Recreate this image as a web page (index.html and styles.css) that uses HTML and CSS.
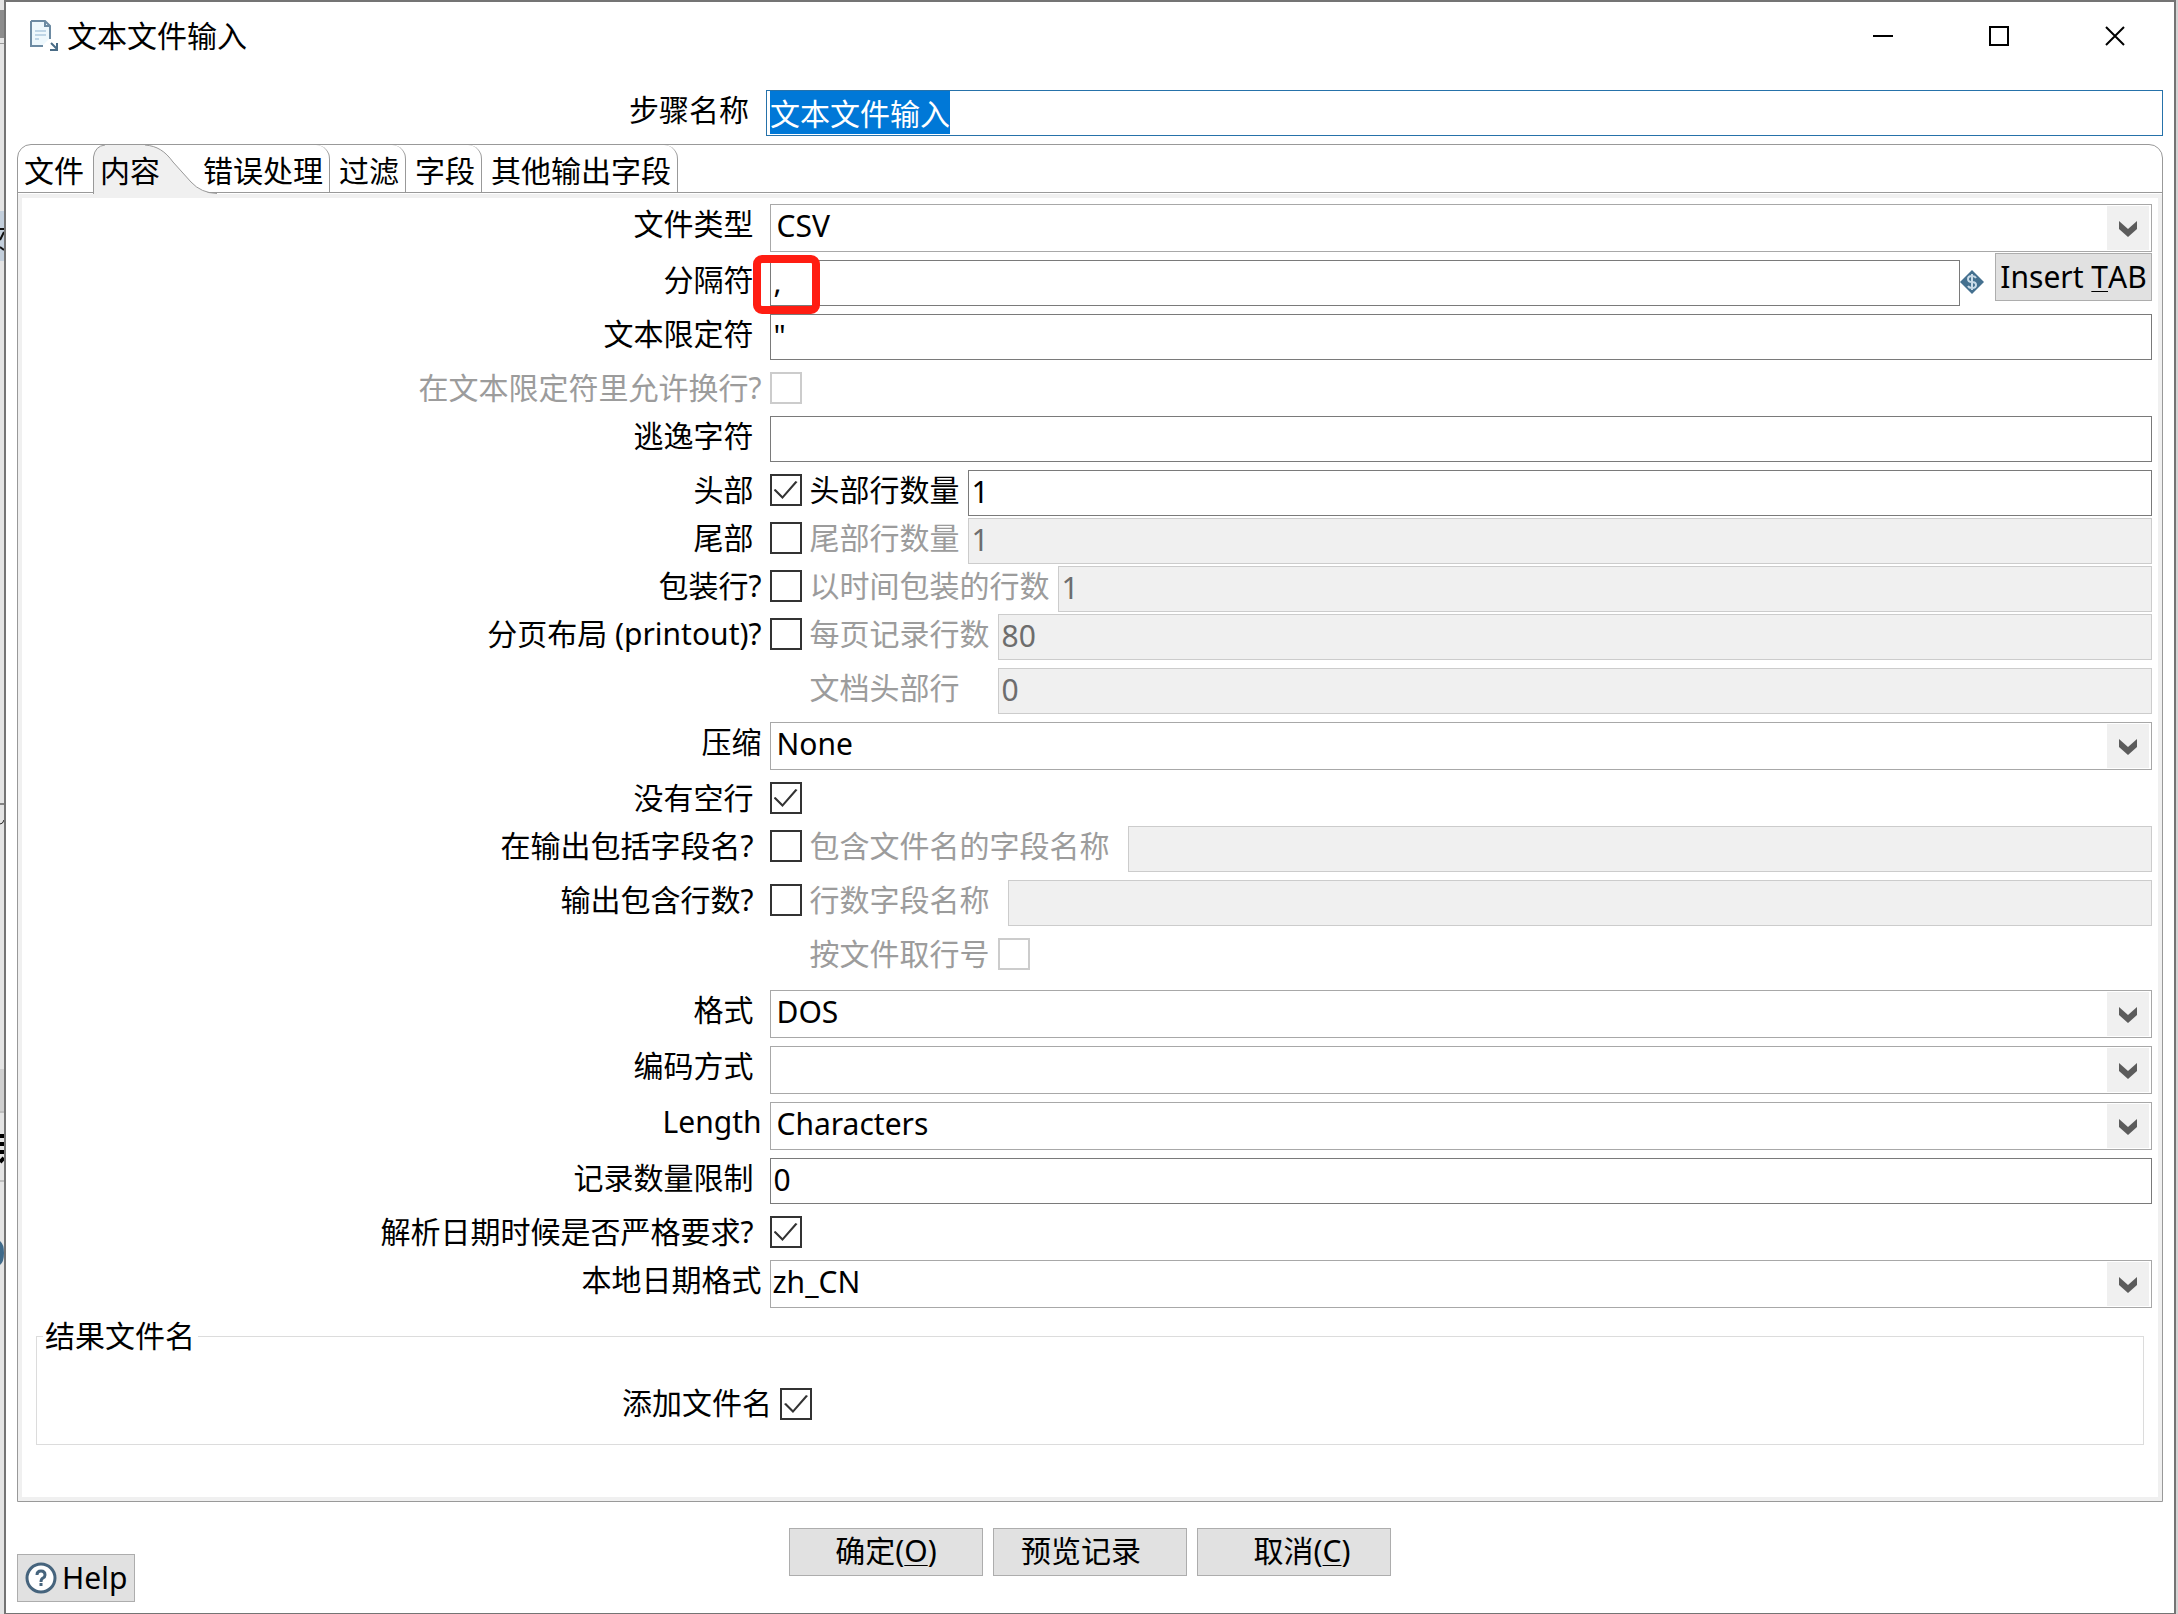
FILE: index.html
```html
<!DOCTYPE html>
<html lang="zh-CN">
<head>
<meta charset="utf-8">
<title>文本文件输入</title>
<link rel="stylesheet" href="styles.css">
</head>
<body>
<svg class="backdrop" width="4" height="1614" viewBox="0 0 4 1614" aria-hidden="true">
  <rect width="4" height="1614" fill="#e4e4e4"/>
  <rect y="10" width="4" height="28" fill="#8c8c8c"/>
  <rect y="43" width="4" height="1" fill="#999"/>
  <rect y="211" width="4" height="50" fill="#c3cfdc"/>
  <path d="M0 229h4M0 247l4 3M0 240l4-8" stroke="#111" stroke-width="2" fill="none"/>
  <path d="M0 804h4M0 824q3 0 4-4" stroke="#222" fill="none"/>
  <rect y="1069" width="4" height="42" fill="#cfcfcf"/>
  <path d="M0 1112h4M0 1181h4" stroke="#999"/>
  <path d="M0 1136h4M0 1144h4M0 1152h4M0 1162l4-4" stroke="#000" stroke-width="4"/>
  <path d="M0 1241q4 3 4 12t-4 12z" fill="#3f6a8a"/>
</svg>
<main class="window">
  <header class="titlebar">
    <svg class="app-icon" width="32" height="34" viewBox="0 0 32 34" aria-hidden="true">
      <path d="M2 2h14l5 5v13M2 2v25h12" fill="#eef8fd" stroke="#6d8ba3" stroke-width="2"/>
      <path d="M3 3h12l5 5v12l-6 6H3z" fill="#eef8fd"/>
      <path d="M16 2v5h5" fill="none" stroke="#6d8ba3" stroke-width="2"/>
      <path d="M6 12h11M6 16h11M6 20h4" stroke="#8fb3d0" stroke-width="1"/>
      <path d="M22 24l6 6M28 24v7h-7" fill="none" stroke="#4a6c86" stroke-width="2"/>
    </svg>
    <h1 class="title">文本文件输入</h1>
    <div class="window-controls">
      <button type="button" class="window-button" aria-label="最小化"><svg width="20" height="20" viewBox="0 0 20 20"><path d="M0 10h20" stroke="#000" stroke-width="2"/></svg></button>
      <button type="button" class="window-button" aria-label="最大化"><svg width="20" height="20" viewBox="0 0 20 20"><path d="M1 1h18v18H1z" fill="none" stroke="#000" stroke-width="2"/></svg></button>
      <button type="button" class="window-button" aria-label="关闭"><svg width="20" height="20" viewBox="0 0 20 20"><path d="M1 1l18 18M19 1L1 19" stroke="#000" stroke-width="2"/></svg></button>
    </div>
  </header>

  <form class="dialog">
    <div class="step-row">
      <label class="label label-step" for="step">步骤名称</label>
      <input class="input input-step" id="step" type="text" value="文本文件输入">
    </div>

    <section class="folder">
      <div class="tabs" role="tablist">
        <button type="button" class="tab tab-first" role="tab">文件</button>
        <button type="button" class="tab tab-selected" role="tab" aria-selected="true">
          <svg class="tab-shape" width="124" height="49" viewBox="0 0 124 49" aria-hidden="true">
            <path d="M0 49V12Q2 1 12 0H52C64 1 72 6 80 17L98 37Q108 48 122 48.500L122 49z" fill="#f0f0f0"/>
            <path d="M0.500 49V12Q2 1 12 0M52 0C64 1 72 6 80 17L98 37Q108 48 124 48.500" fill="none" stroke="#999"/>
          </svg>
          <span class="tab-text">内容</span>
        </button>
        <button type="button" class="tab" role="tab">错误处理</button>
        <button type="button" class="tab" role="tab">过滤</button>
        <button type="button" class="tab" role="tab">字段</button>
        <button type="button" class="tab" role="tab">其他输出字段</button>
      </div>

      <div class="panel" role="tabpanel">
        <div class="row">
          <label class="label" for="filetype">文件类型</label>
          <div class="combo"><select id="filetype"><option>CSV</option></select><svg class="arrow" width="42" height="44" viewBox="0 0 42 44"><path d="M12 15l9 8 9-8v8l-9 8-9-8z"/></svg></div>
        </div>
        <div class="row">
          <label class="label" for="separator">分隔符</label>
          <div class="control separator">
            <input class="input" id="separator" type="text" value=",">
            <svg class="variable" width="24" height="24" viewBox="0 0 24 24" aria-hidden="true">
              <path d="M12 0l12 12-12 12L0 12z" fill="#44708f"/>
              <path d="M16 8q-1-2-4-2-4 0-4 3t4 3 4 3-4 3q-3 0-4-2M12 4v16" fill="none" stroke="#c9dbe8" stroke-width="2"/>
            </svg>
            <button type="button" class="button button-tab">Insert <u>T</u>AB</button>
            <span class="highlight"></span>
          </div>
        </div>
        <div class="row">
          <label class="label" for="enclosure">文本限定符</label>
          <input class="input" id="enclosure" type="text" value="&quot;">
        </div>
        <div class="row">
          <label class="label label-tight muted" for="breaks">在文本限定符里允许换行?</label>
          <div class="control"><input class="check" id="breaks" type="checkbox" disabled></div>
        </div>
        <div class="row">
          <label class="label" for="escape">逃逸字符</label>
          <input class="input" id="escape" type="text">
        </div>
        <div class="row">
          <label class="label" for="header">头部</label>
          <div class="control">
            <input class="check" id="header" type="checkbox" checked>
            <label class="sublabel" for="headerlines">头部行数量</label>
            <input class="input" id="headerlines" type="text" value="1">
          </div>
        </div>
        <div class="row row-close">
          <label class="label" for="footer">尾部</label>
          <div class="control">
            <input class="check" id="footer" type="checkbox">
            <label class="sublabel muted" for="footerlines">尾部行数量</label>
            <input class="input" id="footerlines" type="text" value="1" disabled>
          </div>
        </div>
        <div class="row row-close">
          <label class="label label-tight" for="wrapped">包装行?</label>
          <div class="control">
            <input class="check" id="wrapped" type="checkbox">
            <label class="sublabel muted" for="wraps">以时间包装的行数</label>
            <input class="input" id="wraps" type="text" value="1" disabled>
          </div>
        </div>
        <div class="row row-close">
          <label class="label label-tight" for="paged">分页布局 (printout)?</label>
          <div class="control">
            <input class="check" id="paged" type="checkbox">
            <label class="sublabel muted" for="pagelines">每页记录行数</label>
            <input class="input" id="pagelines" type="text" value="80" disabled>
          </div>
        </div>
        <div class="row">
          <div class="control control-nested">
            <label class="sublabel sublabel-paged muted" for="doclines">文档头部行</label>
            <input class="input" id="doclines" type="text" value="0" disabled>
          </div>
        </div>
        <div class="row">
          <label class="label label-tight" for="compression">压缩</label>
          <div class="combo"><select id="compression"><option>None</option></select><svg class="arrow" width="42" height="44" viewBox="0 0 42 44"><path d="M12 15l9 8 9-8v8l-9 8-9-8z"/></svg></div>
        </div>
        <div class="row">
          <label class="label" for="noempty">没有空行</label>
          <div class="control"><input class="check" id="noempty" type="checkbox" checked></div>
        </div>
        <div class="row">
          <label class="label" for="inclname">在输出包括字段名?</label>
          <div class="control">
            <input class="check" id="inclname" type="checkbox">
            <label class="sublabel sublabel-wide muted" for="namefield">包含文件名的字段名称</label>
            <input class="input" id="namefield" type="text" disabled>
          </div>
        </div>
        <div class="row">
          <label class="label" for="inclrow">输出包含行数?</label>
          <div class="control">
            <input class="check" id="inclrow" type="checkbox">
            <label class="sublabel sublabel-wide muted" for="rowfield">行数字段名称</label>
            <input class="input" id="rowfield" type="text" disabled>
          </div>
        </div>
        <div class="row row-last-check">
          <div class="control control-nested">
            <label class="sublabel muted" for="rowbyfile">按文件取行号</label>
            <input class="check" id="rowbyfile" type="checkbox" disabled>
          </div>
        </div>
        <div class="row">
          <label class="label" for="format">格式</label>
          <div class="combo"><select id="format"><option>DOS</option></select><svg class="arrow" width="42" height="44" viewBox="0 0 42 44"><path d="M12 15l9 8 9-8v8l-9 8-9-8z"/></svg></div>
        </div>
        <div class="row">
          <label class="label" for="encoding">编码方式</label>
          <div class="combo"><select id="encoding"><option></option></select><svg class="arrow" width="42" height="44" viewBox="0 0 42 44"><path d="M12 15l9 8 9-8v8l-9 8-9-8z"/></svg></div>
        </div>
        <div class="row">
          <label class="label label-tight" for="length">Length</label>
          <div class="combo"><select id="length"><option>Characters</option></select><svg class="arrow" width="42" height="44" viewBox="0 0 42 44"><path d="M12 15l9 8 9-8v8l-9 8-9-8z"/></svg></div>
        </div>
        <div class="row">
          <label class="label" for="limit">记录数量限制</label>
          <input class="input" id="limit" type="text" value="0">
        </div>
        <div class="row">
          <label class="label" for="lenient">解析日期时候是否严格要求?</label>
          <div class="control"><input class="check" id="lenient" type="checkbox" checked></div>
        </div>
        <div class="row">
          <label class="label label-tight" for="locale">本地日期格式</label>
          <div class="combo combo-tight"><select id="locale"><option>zh_CN</option></select><svg class="arrow" width="42" height="44" viewBox="0 0 42 44"><path d="M12 15l9 8 9-8v8l-9 8-9-8z"/></svg></div>
        </div>

        <fieldset class="group">
          <legend>结果文件名</legend>
          <div class="group-row">
            <label class="label label-tight" for="addresult">添加文件名</label>
            <input class="check" id="addresult" type="checkbox" checked>
          </div>
        </fieldset>
      </div>
    </section>

    <footer class="footer">
      <button type="button" class="button button-help">
        <svg width="32" height="32" viewBox="0 0 32 32" aria-hidden="true">
          <circle cx="16" cy="16" r="14" fill="#fff" stroke="#46647d" stroke-width="3"/>
          <path d="M12 13q0-4 4-4t4 4q0 2-2 3t-2 4M16 21v3" fill="none" stroke="#46647d" stroke-width="3"/>
        </svg>Help</button>
      <div class="actions">
        <button type="button" class="button button-action">确定(<u>O</u>)</button>
        <button type="button" class="button button-action button-preview">预览记录</button>
        <button type="button" class="button button-action button-cancel">取消(<u>C</u>)</button>
      </div>
    </footer>
  </form>
</main>
<script src="dialog.js"></script>
</body>
</html>
```
FILE: dialog.js
```js
const step = document.getElementById('step');
step.focus();
step.select();
```
FILE: styles.css
```css
* { box-sizing: border-box; }

body {
  margin: 0;
  background: #d4d4d4;
  color: #000;
  font: 30px/40px "Noto Sans", "Noto Sans CJK SC", sans-serif;
}

button, input, select {
  font: inherit;
  color: inherit;
  margin: 0;
  border-radius: 0;
  outline: none;
}

svg { display: block; flex: none; }

.backdrop { position: absolute; left: 0; top: 0; }

.window {
  margin: 0 2px 0 4px;
  border: 2px solid #747474;
  background: #fff;
}

.titlebar {
  display: flex;
  align-items: center;
  height: 72px;
  padding: 0 19px 4px 23px;
}

.title {
  margin: 0 auto 0 6px;
  font-size: 30px;
  font-weight: 400;
}

.window-controls { display: flex; }

.window-button {
  display: grid;
  place-items: center;
  width: 116px;
  height: 56px;
  padding: 0;
  border: 0;
  background: none;
}

.window-button:last-child { padding-left: 18px; width: 98px; }

.dialog { padding: 16px 11px 11px; }

.step-row {
  display: grid;
  grid-template-columns: calc(35% - 2px) minmax(0, 1fr);
  margin-bottom: 8px;
}

.label {
  padding-right: 16px;
  text-align: right;
  white-space: nowrap;
}

.label-step { padding-right: 17px; }

.label-tight { padding-right: 8px; }

.muted { color: #9c9c9c; }

.input {
  flex: 1;
  width: 100%;
  min-width: 0;
  height: 46px;
  padding: 0 3px 3px;
  border: 1px solid #7a7a7a;
  background: #fff;
  line-height: 38px;
}

.input:disabled {
  border-color: #ccc;
  background: #f0f0f0;
  color: #6d6d6d;
}

.input-step { border-color: #2672aa; }

.input-step::selection { background: #0078d7; color: #fff; }

.folder {
  border: 1px solid #999;
  border-radius: 14px 14px 0 0;
}

.tabs {
  display: flex;
  height: 48px;
  border-bottom: 1px solid #999;
}

.tab {
  position: relative;
  padding: 4px 6px 0 9px;
  border: 0;
  border-right: 1px solid #999;
  border-top-right-radius: 14px;
  background: none;
}

.tab-first { padding: 4px 9px 0 6px; border-right: 0; }

.tab-selected { padding: 4px 34px 0 7px; border-right: 0; }

.tab-shape { position: absolute; left: 0; top: 0; }

.tab-text { position: relative; }

.panel {
  display: flex;
  flex-direction: column;
  margin-top: 1px;
  padding: 6px 0 52px;
  border: 4px solid #f0f0f0;
}

.row {
  display: grid;
  grid-template-columns: calc(35% + 2px) minmax(0, 1fr);
  align-items: start;
  margin-bottom: 8px;
  padding-right: 6px;
}

.row > .label, .sublabel { height: 40px; }

.row:has(+ .row-close) { margin-bottom: 2px; }

.row-last-check { margin-bottom: 16px; }

.control {
  position: relative;
  display: flex;
  align-items: flex-start;
  gap: 8px;
}

.control-nested { grid-column: 2; padding-left: 40px; }

.sublabel { white-space: nowrap; }
.sublabel-wide { padding-right: 10px; }
.sublabel-paged { min-width: 180px; }

.check {
  appearance: none;
  flex: none;
  width: 32px;
  height: 32px;
  margin: 4px 0;
  border: 2px solid #333;
  background: #fff;
  display: grid;
  place-items: center;
}

.check:disabled { border-color: #ccc; }

.check:checked::before {
  content: "";
  width: 24px;
  height: 18px;
  background: #333;
  clip-path: polygon(0 9px, 2px 8px, 9px 15px, 22px 0, 24px 1px, 9px 18px);
}

.combo {
  display: grid;
  height: 48px;
  border: 1px solid #a8a8a8;
}

.combo select {
  grid-area: 1 / 1;
  appearance: none;
  width: 100%;
  height: 46px;
  padding: 0 48px 4px 6px;
  border: 0;
  background: #fff;
}

.combo-tight select { padding-left: 2px; }

.arrow {
  grid-area: 1 / 1;
  justify-self: end;
  margin: 1px 2px;
  background: #f0f0f0;
  fill: #5c5c5c;
  pointer-events: none;
}

.separator { gap: 0; }
.variable { margin: 10px 11px 0 0; }

.highlight {
  position: absolute;
  left: -17px;
  top: -5px;
  width: 67px;
  height: 59px;
  border: 8px solid #ff1d12;
  border-radius: 9px;
}

.button {
  display: flex;
  align-items: center;
  justify-content: center;
  height: 48px;
  padding: 0 0 2px;
  border: 1px solid #adadad;
  background: #e1e1e1;
  white-space: pre;
}

.button u { text-underline-offset: 3px; text-decoration-thickness: 1px; }

.button-tab {
  width: 157px;
  margin: -7px 0 -1px;
  padding-bottom: 0;
}

.group {
  min-width: 0;
  margin: 0 14px;
  padding: 27px 0 19px 6px;
  border: 1px solid #dcdcdc;
}

.group legend { padding: 0 3px 0 2px; }

.group-row {
  display: grid;
  grid-template-columns: calc(35% + 2px) auto;
  justify-content: start;
}

.group .check { margin: 5px 0; }

.footer {
  display: grid;
  grid-template-columns: 1fr auto 1fr;
  min-height: 74px;
  margin-top: 26px;
}

.actions { display: flex; gap: 10px; }

.button-action { width: 194px; }
.button-preview { padding-right: 18px; }
.button-cancel { padding-left: 16px; }

.button-help {
  align-self: end;
  justify-self: start;
  gap: 5px;
  padding: 0 7px;
}
```
